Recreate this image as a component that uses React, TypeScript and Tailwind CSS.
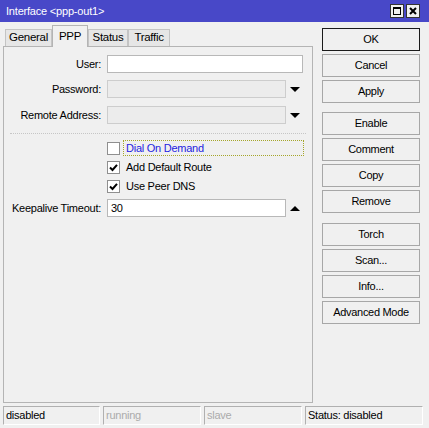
import React from 'react';

const font = "font-['Liberation_Sans',Arial,sans-serif]";

const Btn = ({ label, primary }: { label: string; primary?: boolean }) => (
    <div
        className={`h-[23px] flex items-center justify-center bg-[#f0f0f0] text-[11px] tracking-[-0.3px] text-black border ${
            primary ? 'border-[#1a1a1a]' : 'border-[#a7a7a7]'
        }`}
    >
        {label}
    </div>
);

const Arrow = ({ up }: { up?: boolean }) => (
    <svg width="10" height="5" viewBox="0 0 10 5" className="ml-[4px]">
        {up ? <polygon points="0,5 10,5 5,0" fill="#000" /> : <polygon points="0,0 10,0 5,5" fill="#000" />}
    </svg>
);

const Check = ({ checked }: { checked: boolean }) => (
    <div className="w-[13px] h-[13px] border border-[#8f8f8f] bg-white flex items-center justify-center shrink-0">
        {checked && (
            <svg width="9" height="9" viewBox="0 0 9 9">
                <path d="M1 4.5 L3.5 7 L8 1.8" stroke="#000" strokeWidth="2" fill="none" />
            </svg>
        )}
    </div>
);

export default function App() {
    const tabs = [
        { name: 'General', w: 'w-[47px]' },
        { name: 'PPP', w: 'w-[36px]', active: true },
        { name: 'Status', w: 'w-[40px]' },
        { name: 'Traffic', w: 'w-[42px]' },
    ];

    return (
        <div className={`w-[429px] h-[428px] bg-[#f0f0f0] flex flex-col ${font} text-black`}>
            {/* Title bar */}
            <div className="h-[22px] bg-[#4848c8] flex items-center pl-[6px] pr-[9px]">
                <span className="text-white text-[11px] tracking-[-0.2px]">Interface &lt;ppp-out1&gt;</span>
                <div className="ml-auto flex gap-[2px]">
                    <div className="w-[14px] h-[14px] bg-[#f0f0f0] border border-[#333] flex items-center justify-center">
                        <div className="w-[8px] h-[8px] border border-black border-t-2" />
                    </div>
                    <div className="w-[14px] h-[14px] bg-[#f0f0f0] border border-[#333] flex items-center justify-center">
                        <svg width="8" height="8" viewBox="0 0 8 8">
                            <path d="M1 1 L7 7 M7 1 L1 7" stroke="#000" strokeWidth="2" />
                        </svg>
                    </div>
                </div>
            </div>

            <div className="flex px-[3px] pt-[3px]">
                {/* Left column */}
                <div className="w-[310px] flex flex-col">
                    <div className="h-[21px] flex items-end pl-[2px]">
                        {tabs.map(t =>
                            t.active ? (
                                <div
                                    key={t.name}
                                    className={`${t.w} h-[22px] -mb-px relative z-10 bg-[#f0f0f0] border border-b-0 border-[#b4b4b4] flex items-center justify-center text-[11.5px] tracking-[-0.3px]`}
                                >
                                    {t.name}
                                </div>
                            ) : (
                                <div
                                    key={t.name}
                                    className={`${t.w} h-[17px] bg-[#e6e6e6] border border-b-0 border-[#c4c4c4] flex items-center justify-center text-[11.5px] tracking-[-0.3px]`}
                                >
                                    {t.name}
                                </div>
                            )
                        )}
                    </div>

                    <div className="h-[357px] border border-[#b4b4b4] pt-[8px] text-[11px] tracking-[-0.25px]">
                        <div className="flex items-center h-[18px]">
                            <div className="w-[97px] text-right">User:</div>
                            <div className="ml-[6px] w-[196px] h-[18px] bg-white border border-[#b8b8b8]" />
                        </div>
                        <div className="flex items-center h-[18px] mt-[7px]">
                            <div className="w-[97px] text-right">Password:</div>
                            <div className="ml-[6px] w-[179px] h-[18px] bg-[#ececec] border border-[#cdcdcd]" />
                            <Arrow />
                        </div>
                        <div className="flex items-center h-[18px] mt-[8px]">
                            <div className="w-[97px] text-right">Remote Address:</div>
                            <div className="ml-[6px] w-[179px] h-[18px] bg-[#ececec] border border-[#cdcdcd]" />
                            <Arrow />
                        </div>

                        <div className="ml-[6px] w-[296px] mt-[9px] border-t border-dotted border-[#c6c6c6]" />

                        <div className="mt-[6px] flex flex-col gap-[3px]">
                            <div className="flex items-center h-[16px] pl-[103px]">
                                <Check checked={false} />
                                <div className="ml-[3px] w-[181px] h-[16px] border border-dotted border-[#a6a62a] pl-[2px] flex items-center text-[#2424e0]">
                                    Dial On Demand
                                </div>
                            </div>
                            <div className="flex items-center h-[16px] pl-[103px]">
                                <Check checked />
                                <span className="ml-[6px]">Add Default Route</span>
                            </div>
                            <div className="flex items-center h-[16px] pl-[103px]">
                                <Check checked />
                                <span className="ml-[6px]">Use Peer DNS</span>
                            </div>
                        </div>

                        <div className="flex items-center h-[18px] mt-[5px]">
                            <div className="w-[97px] text-right">Keepalive Timeout:</div>
                            <div className="ml-[6px] w-[179px] h-[18px] bg-white border border-[#b8b8b8] flex items-center pl-[3px]">
                                30
                            </div>
                            <Arrow up />
                        </div>
                    </div>
                </div>

                {/* Right column */}
                <div className="ml-[9px] mt-[3px] w-[98px] flex flex-col gap-[3px]">
                    <Btn label="OK" primary />
                    <Btn label="Cancel" />
                    <Btn label="Apply" />
                    <div className="mt-[6px]">
                        <Btn label="Enable" />
                    </div>
                    <Btn label="Comment" />
                    <Btn label="Copy" />
                    <Btn label="Remove" />
                    <div className="mt-[7px]">
                        <Btn label="Torch" />
                    </div>
                    <Btn label="Scan..." />
                    <Btn label="Info..." />
                    <Btn label="Advanced Mode" />
                </div>
            </div>

            {/* Status bar */}
            <div className="ml-[3px] mt-[3px] w-[420px] h-[19px] flex gap-[3px] text-[11px] tracking-[-0.25px]">
                <div className="w-[97px] border border-[#b0b0b0] border-b-white border-r-white flex items-center pl-[2px]">disabled</div>
                <div className="w-[98px] border border-[#b0b0b0] border-b-white border-r-white flex items-center pl-[2px] text-[#ababab]">running</div>
                <div className="w-[98px] border border-[#b0b0b0] border-b-white border-r-white flex items-center pl-[2px] text-[#ababab]">slave</div>
                <div className="flex-1 border border-[#b0b0b0] border-b-white border-r-white flex items-center pl-[2px]">Status: disabled</div>
            </div>
        </div>
    );
}
